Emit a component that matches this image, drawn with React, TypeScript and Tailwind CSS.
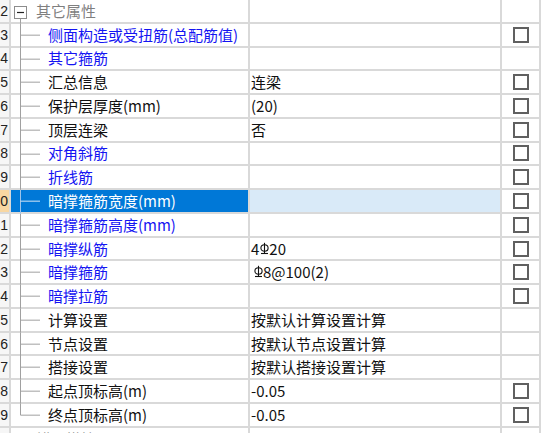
import React from 'react';

type Row = {
  n: number;
  name: string;
  header?: boolean;
  blue?: boolean;
  cb?: boolean;
  selected?: boolean;
  last?: boolean;
  value?: React.ReactNode;
};

function Rebar() {
  return (
    <svg width="9" height="13" viewBox="0 0 9 13" className="inline-block shrink-0">
      <ellipse cx="4.5" cy="6" rx="3.6" ry="3.3" fill="none" stroke="#111" strokeWidth="1.1" />
      <line x1="4.5" y1="0.8" x2="4.5" y2="12" stroke="#111" strokeWidth="1.1" />
      <line x1="1" y1="11.5" x2="8" y2="11.5" stroke="#111" strokeWidth="1.1" />
    </svg>
  );
}

const rows: Row[] = [
  { n: 12, name: '其它属性', header: true },
  { n: 13, name: '侧面构造或受扭筋(总配筋值)', blue: true, cb: true },
  { n: 14, name: '其它箍筋', blue: true },
  { n: 15, name: '汇总信息', value: '连梁', cb: true },
  { n: 16, name: '保护层厚度(mm)', value: '(20)', cb: true },
  { n: 17, name: '顶层连梁', value: '否', cb: true },
  { n: 18, name: '对角斜筋', blue: true, cb: true },
  { n: 19, name: '折线筋', blue: true, cb: true },
  { n: 20, name: '暗撑箍筋宽度(mm)', blue: true, cb: true, selected: true },
  { n: 21, name: '暗撑箍筋高度(mm)', blue: true, cb: true },
  {
    n: 22,
    name: '暗撑纵筋',
    blue: true,
    cb: true,
    value: (
      <span className="flex items-center">
        4<span className="w-[1px]" />
        <Rebar />
        20
      </span>
    ),
  },
  {
    n: 23,
    name: '暗撑箍筋',
    blue: true,
    cb: true,
    value: (
      <span className="flex items-center pl-[3px]">
        <Rebar />
        8@100(2)
      </span>
    ),
  },
  { n: 24, name: '暗撑拉筋', blue: true, cb: true },
  { n: 25, name: '计算设置', value: '按默认计算设置计算' },
  { n: 26, name: '节点设置', value: '按默认节点设置计算' },
  { n: 27, name: '搭接设置', value: '按默认搭接设置计算' },
  { n: 28, name: '起点顶标高(m)', value: '-0.05', cb: true },
  { n: 29, name: '终点顶标高(m)', value: '-0.05', cb: true, last: true },
  { n: 30, name: '锚固搭接', header: true },
];

function Tree({ row }: { row: Row }) {
  const c = row.selected ? '#9cc3ea' : '#a0a0a0';
  if (row.header) {
    return (
      <svg width="25" className="shrink-0 self-start h-[calc(100%+2px)] overflow-visible">
        {row.n === 12 && <line x1="9.5" y1="18" x2="9.5" y2="100%" stroke={c} strokeWidth="1" />}
        <rect x="3.5" y="6.5" width="12" height="12" fill="#fff" stroke="#8c8c8c" strokeWidth="1" />
        <line x1="6" y1="12.5" x2="13" y2="12.5" stroke="#222" strokeWidth="1.2" />
      </svg>
    );
  }
  return (
    <svg width="37" className="shrink-0 self-start h-[calc(100%+2px)] overflow-visible">
      <line x1="9.5" y1="0" x2="9.5" y2={row.last ? '47%' : '100%'} stroke={c} strokeWidth="1" />
      <line x1="9.5" y1="47%" x2="29" y2="47%" stroke={row.selected ? '#d6e6f6' : c} strokeWidth="1" />
    </svg>
  );
}

export default function App() {
  return (
    <div
      className="w-[552px] h-[433px] overflow-hidden bg-white"
      style={{ fontFamily: '"Noto Sans CJK SC", "Noto Sans", sans-serif' }}
    >
      {rows.map((row) => {
        const nameColor = row.selected
          ? 'text-white'
          : row.header
            ? 'text-[#7f7f7f]'
            : row.blue
              ? 'text-[#1414f2]'
              : 'text-[#111]';
        return (
          <div key={row.n} className="flex h-[23.78px] text-[15px] leading-none">
            <div
              className={`w-[11px] shrink-0 flex items-center justify-end overflow-hidden border-r-2 border-b-2 border-[#d9d9d9] pr-[1px] text-[14px] text-[#222] ${
                row.selected ? 'bg-[#f8d7a2]' : 'bg-[#f6f6f6]'
              }`}
              style={{ fontFamily: '"Liberation Sans", sans-serif' }}
            >
              {row.n}
            </div>
            <div
              className={`w-[239px] shrink-0 flex items-center border-r-2 border-b-2 border-[#d9d9d9] whitespace-nowrap overflow-visible ${nameColor} ${
                row.selected ? 'bg-[#0078d7]' : ''
              }`}
            >
              <Tree row={row} />
              <span className="pb-[1px]">{row.name}</span>
            </div>
            <div
              className={`w-[252px] shrink-0 flex items-center border-r-2 border-b-2 border-[#d9d9d9] pl-[1px] text-[#111] whitespace-nowrap ${
                row.selected ? 'bg-[#d9eaf8]' : ''
              }`}
            >
              <span className="pb-[1px]">{row.value}</span>
            </div>
            <div className="w-[39px] shrink-0 flex items-center justify-center border-r-2 border-b-2 border-[#d9d9d9]">
              {row.cb && <div className="w-[16px] h-[16px] border-2 border-[#606060] bg-white" />}
            </div>
          </div>
        );
      })}
    </div>
  );
}
